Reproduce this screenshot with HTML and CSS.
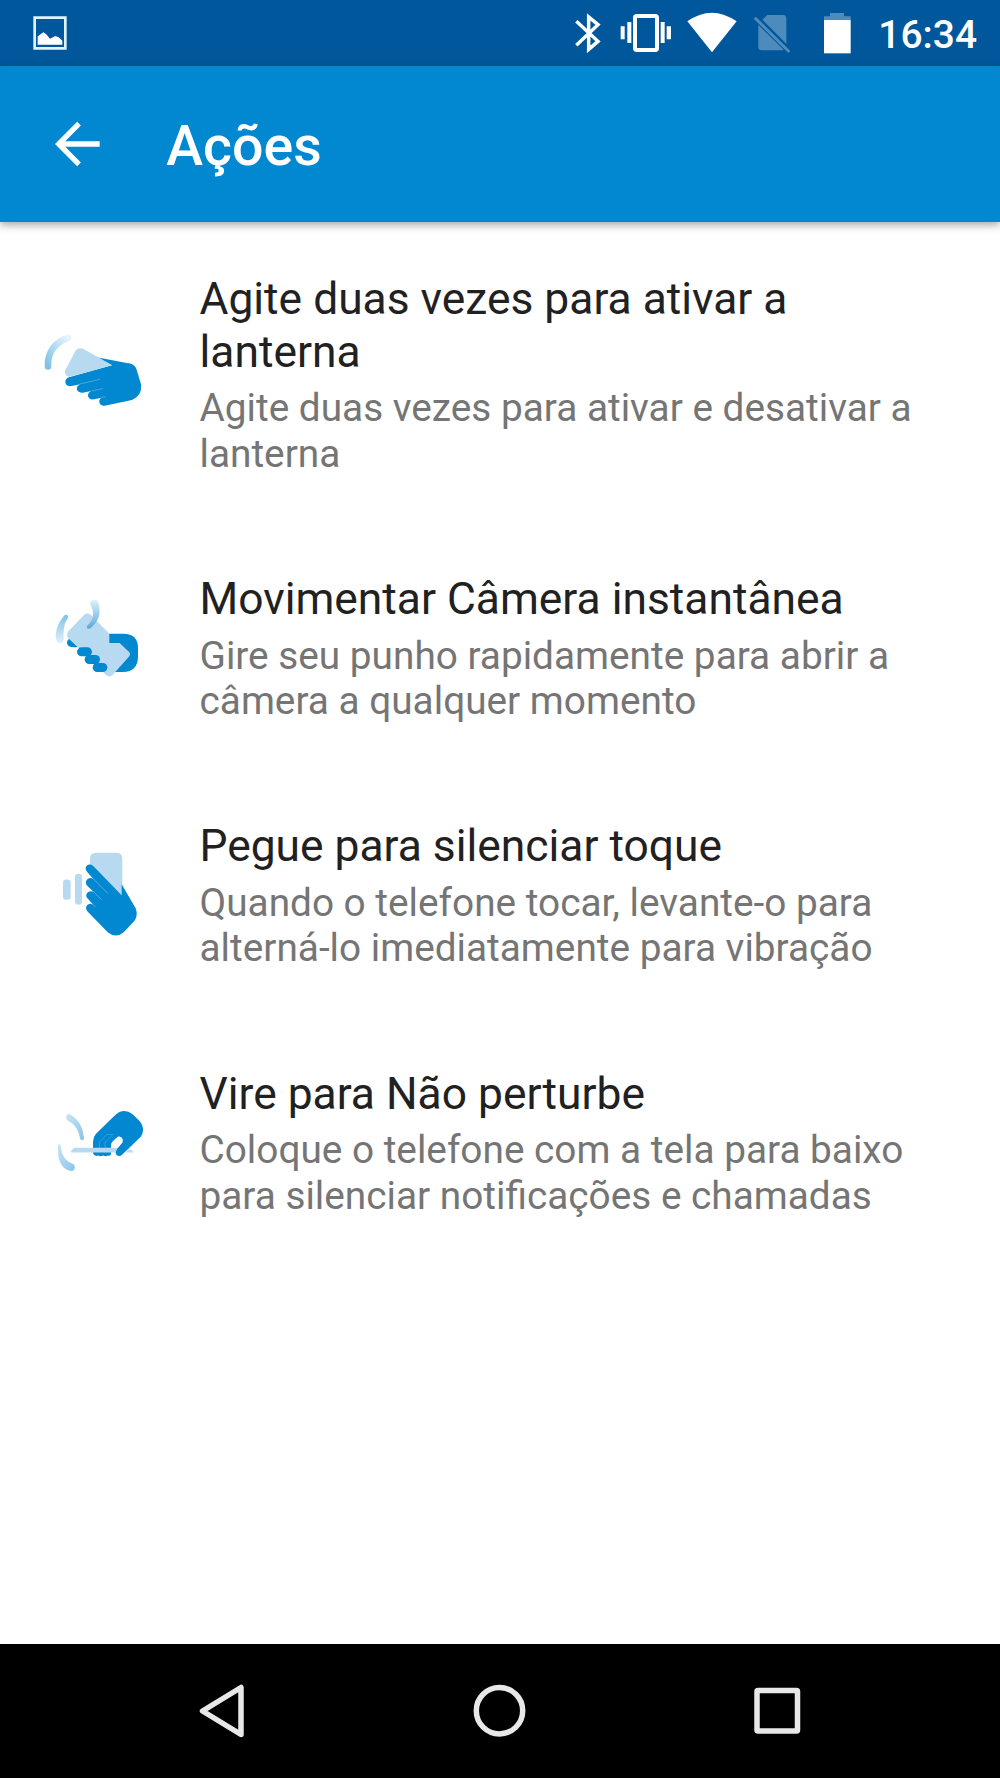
FILE: index.html
```html
<!DOCTYPE html>
<html lang="pt-BR">
<head>
<meta charset="utf-8">
<title>Ações</title>
<link rel="stylesheet" href="styles.css">
</head>
<body>
<div class="screen">
  <div class="status">
    <svg class="photo" width="34" height="34" viewBox="0 0 102 102"><path fill="none" stroke="#dff4ff" stroke-width="8" d="M5 5h92v92H5z"/><path fill="#fff" d="M14 86V61l17-12 8 5 12 14 16-8 10 4 11 10v12z"/></svg>
    <div class="icons">
      <svg width="40" height="66" viewBox="30 0 120 198"><path fill="none" stroke="#fff" stroke-width="10.500" d="M49 64l65 60-28 24V51l28 23-65 62"/></svg>
      <svg width="70" height="66" viewBox="150 0 210 198"><rect x="225" y="48" width="66" height="102" rx="5" fill="none" stroke="#fff" stroke-width="12"/><path fill="#fff" d="M182 79h12v39h-12zM202 66h12v63h-12zM302 66h12v63h-12zM320 79h13v39h-13z"/></svg>
      <svg width="65" height="66" viewBox="360 0 195 198"><path fill="#fff" d="M382 64Q455 12 530 64L456 157z"/></svg>
      <svg width="60" height="66" viewBox="555 0 180 198"><path fill="#4e8bbd" d="M622 45h47q10 0 10 10v76L607 59zM595 75l76 74-5 2h-61q-10 0-10-10zM588 50l103 103-6 6L581 56z"/></svg>
      <svg width="65" height="66" viewBox="735 0 195 198"><path fill="#4e8bbd" d="M810 39h42v10h20v12h-80V49h18z"/><path fill="#fff" d="M792 60h80v100h-80z"/></svg>
    </div>
    <span class="clock">16:34</span>
  </div>
  <header class="bar">
    <svg class="back" width="46" height="46" viewBox="0 0 138 138"><path fill="none" stroke="#fff" stroke-width="16" d="M134 69H10M72 8L11 69l61 61"/></svg>
    <h1>Ações</h1>
  </header>
  <main class="list">
    <section class="row">
      <svg class="art" viewBox="0 -17 360 360">
        <defs><linearGradient id="g1" x1="0" y1="1" x2="1" y2="0"><stop offset="0" stop-color="#7fc2e6"/><stop offset=".5" stop-color="#b3dcf1"/><stop offset="1" stop-color="#e6f4fb"/></linearGradient></defs>
        <path fill="none" stroke="url(#g1)" stroke-width="20" stroke-linecap="round" d="M54 137C52 95 76 64 114 52"/>
        <path fill="#0288d1" d="M200 110L290 127Q314 128 320 147L333 191Q337 226 306 238L224 255C207 257 203 238 214 231L192 236C173 239 167 218 184 211L158 216C139 218 134 197 151 191L124 196C103 200 100 175 117 170L245 134z"/>
        <path fill="#b8daf0" d="M105 150L135 93Q145 76 165 87L247 134L119 168Q103 166 105 150z"/>
        <path fill="none" stroke="#69b5e1" stroke-width="2" d="M150 190l60-14M184 211l34-7M214 231l12-3"/>
      </svg>
      <div class="text"><h2>Agite duas vezes para ativar a<br>lanterna</h2><p>Agite duas vezes para ativar e desativar a<br>lanterna</p></div>
    </section>
    <section class="row">
      <svg class="art" viewBox="-30 -9 360 360">
        <defs><linearGradient id="g2" x1="0" y1="0" x2="0" y2="1"><stop offset="0" stop-color="#7fc2e6"/><stop offset="1" stop-color="#e0f1fa"/></linearGradient><linearGradient id="g3" x1="0" y1="0" x2="0" y2="1"><stop offset="0" stop-color="#e0f1fa"/><stop offset="1" stop-color="#58a9d9"/></linearGradient></defs>
        <path fill="url(#g2)" d="M72 74C80 66 90 77 82 84Q68 103 71 145C71 159 53 161 49 148Q40 113 72 74z"/>
        <path fill="#0288d1" d="M205 128H250Q294 128 294 171V196Q294 243 248 243H212L240 184L205 156C183 157 183 129 205 128z"/>
        <path fill="#0288d1" d="M87 143l28 25q-33 4-34-12 0-9 6-13z"/>
        <path fill="#b8daf0" d="M85 121L132 72Q142 62 153 72L208 128V156H239L268 184Q273 190 268 196L217 253Q208 260 198 252L84 140Q78 131 85 121z"/>
        <g fill="#0288d1"><rect x="111" y="169" width="45" height="27" rx="13.500"/><rect x="134" y="192" width="46" height="27" rx="13.500"/><rect x="158" y="216" width="44" height="27" rx="13.500"/></g>
        <path fill="url(#g3)" d="M151 41C146 27 168 20 175 34Q189 83 151 112C142 117 137 108 143 103Q171 75 151 41z"/>
      </svg>
      <div class="text"><h2>Movimentar Câmera instantânea</h2><p>Gire seu punho rapidamente para abrir a<br>câmera a qualquer momento</p></div>
    </section>
    <section class="row">
      <svg class="art" viewBox="-60 -14.500 360 360">
        <g fill="#b8daf0"><rect x="39" y="116" width="23" height="61" rx="10"/><rect x="75" y="99" width="21" height="93" rx="10"/><path d="M137 36H200Q217 36 217 54V164L120 76V54Q120 37 137 36z"/></g>
        <path fill="#0288d1" d="M129 75L215 163V130L257 202Q267 227 248 246L221 274Q198 294 174 275L112 211C101 198 116 182 130 192L111 171C103 157 119 145 132 154L111 134C101 120 117 104 131 115L113 95C98 79 115 63 129 75z"/>
        <path fill="none" stroke="#69b5e1" stroke-width="2.500" d="M129 113l45 45M130 152l25 25M128 190l8 8"/>
      </svg>
      <div class="text"><h2>Pegue para silenciar toque</h2><p>Quando o telefone tocar, levante-o para<br>alterná-lo imediatamente para vibração</p></div>
    </section>
    <section class="row">
      <svg class="art" viewBox="-30 -39.600 360 360">
        <defs><linearGradient id="g4" x1="0" y1="0" x2="1" y2="1"><stop offset="0" stop-color="#c9e5f4"/><stop offset="1" stop-color="#86c5e8"/></linearGradient></defs>
        <path fill="url(#g4)" d="M90 54Q127 75 132 124C133 134 122 135 120 126Q114 90 88 76C73 72 77 51 90 54z"/>
        <path fill="url(#g4)" d="M56 144C62 144 62 150 63 157Q69 192 94 201C109 204 107 223 95 225Q51 217 54 153Q53 146 56 144z"/>
        <path fill="#0288d1" d="M159 171V137Q159 123 168 113L222 60Q249 32 279 55L300 76Q317 98 303 121L247 175Q238 184 229 176Q225 170 229 161L244 143Q252 126 237 121L219 137Q213 143 213 155V172Q212 181 203 178Q198 183 190 178Q182 183 174 178Q164 182 159 171z"/>
        <path fill="none" stroke="#4ba6da" stroke-width="2" d="M178 158v-20l22-23h20M195 158v-20l20-19"/>
        <path fill="#fff" d="M214 155V143Q214 137 235 121Q251 122 248 138L232 155z"/>
        <path fill="#b8daf0" d="M92 167L102 155H231L227 169H94zM258 169L266 160Q280 160 279 169z"/>
      </svg>
      <div class="text"><h2>Vire para Não perturbe</h2><p>Coloque o telefone com a tela para baixo<br>para silenciar notificações e chamadas</p></div>
    </section>
  </main>
  <nav class="nav">
    <svg width="56" height="60" viewBox="0 0 56 60"><path d="M46 6.500V53.500L7.500 30z"/></svg>
    <svg width="56" height="60" viewBox="0 0 56 60"><circle cx="27.500" cy="29.700" r="23.200"/></svg>
    <svg width="56" height="60" viewBox="0 0 56 60"><rect x="8" y="9.500" width="40.500" height="40.500" rx="1"/></svg>
  </nav>
</div>
</body>
</html>
```
FILE: styles.css
```css
* { box-sizing: border-box; }
body { margin: 0; background: #fff; font-family: Roboto, "Noto Sans", sans-serif; }
h1, h2, p { margin: 0; }
svg { display: block; flex: none; }
.screen { width: 1000px; height: 1778px; display: flex; flex-direction: column; overflow: hidden; }
.status { height: 66px; flex: none; background: #01579b; display: flex; align-items: center; padding: 0 23px 0 33px; }
.icons { display: flex; margin-left: auto; }
.clock { width: 107px; text-align: right; color: #fff; font-weight: 500; font-size: 38.900px; line-height: 66px; padding-top: 4px; white-space: nowrap; }
.bar { height: 156px; flex: none; background: #0288d1; display: flex; align-items: center; padding: 0 55px; box-shadow: 0 3px 8px rgba(0, 0, 0, .35); }
.back { margin-top: -1px; }
.bar h1 { margin-left: 65.300px; padding-top: 6px; color: #fff; font-weight: 500; font-size: 55.500px; line-height: 66px; }
.list { flex: 1; padding-top: 3px; }
.row { display: flex; align-items: center; padding: 48.400px 0 48.800px 30px; }
.art { width: 120px; height: 120px; }
.text { margin-left: 49.500px; white-space: nowrap; }
.text h2 { font-weight: 400; font-size: 44.350px; line-height: 52.500px; color: #212121; }
.text p { margin-top: 7px; font-size: 38.780px; line-height: 45.300px; color: #757575; }
.nav { height: 134px; flex: none; background: #000; display: flex; justify-content: space-between; align-items: center; padding: 0 195px; }
.nav svg { fill: none; stroke: #e8e8e8; stroke-width: 5.500; stroke-linejoin: round; }
```
